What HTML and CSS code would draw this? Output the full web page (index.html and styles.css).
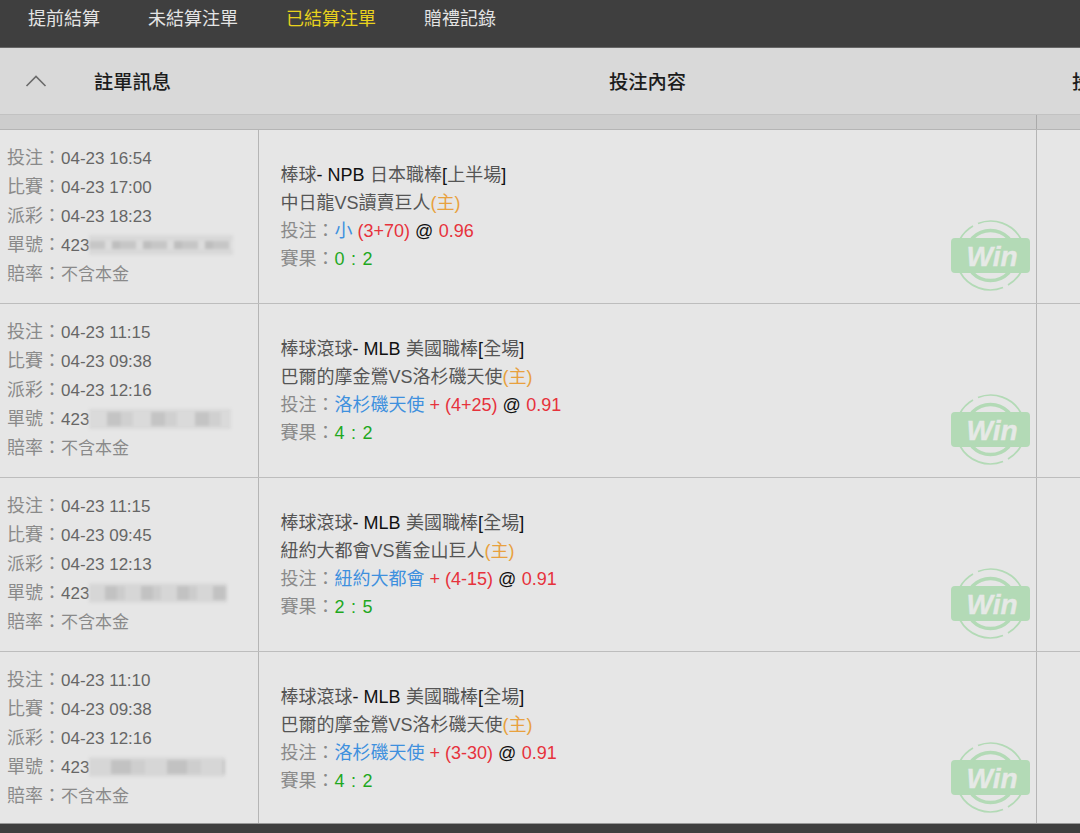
FILE: index.html
```html
<!DOCTYPE html>
<html lang="zh-Hant">
<head>
<meta charset="utf-8">
<title>已結算注單</title>
<link rel="stylesheet" href="styles.css">
</head>
<body>
<svg class="defs" width="0" height="0" aria-hidden="true">
  <symbol id="win" viewBox="0 0 80 72">
    <g fill="none" stroke="#b3dab6">
      <path d="M8.5 20A34.5 34.5 0 0 1 22 6" stroke-width="1.7"/>
      <path d="M27 3.5A34.5 34.5 0 0 1 70 19" stroke-width="1.7"/>
      <path d="M70.5 51A34.5 34.5 0 0 1 57 65" stroke-width="1.7"/>
      <path d="M52 67.5A34.5 34.5 0 0 1 9 52" stroke-width="1.7"/>
      <circle cx="39.5" cy="35.5" r="25" stroke-width="3.4"/>
    </g>
    <rect x="0" y="18" width="79" height="35" rx="4" fill="#b3dab6"/>
  </symbol>
</svg>
<nav class="nav">
  <a class="nav-item">提前結算</a>
  <a class="nav-item">未結算注單</a>
  <a class="nav-item active">已結算注單</a>
  <a class="nav-item">贈禮記錄</a>
</nav>
<header class="head">
  <div class="head-info">
    <svg class="chevron" width="22" height="12" viewBox="0 0 22 12"><path d="M1.5 11L11 1.5 20.5 11" fill="none" stroke="#6b6b6b" stroke-width="1.6"/></svg>
    <span>註單訊息</span>
  </div>
  <div class="head-content">投注內容</div>
  <div class="head-extra"><span>投注金額</span></div>
</header>
<div class="strip"><div></div><div class="strip-last"></div></div>
<main>
  <section class="row">
    <div class="info">
      <div><span class="label">投注：</span>04-23 16:54</div>
      <div><span class="label">比賽：</span>04-23 17:00</div>
      <div><span class="label">派彩：</span>04-23 18:23</div>
      <div><span class="label">單號：</span>423<span class="mosaic m1"></span></div>
      <div><span class="label">賠率：</span><span class="odds">不含本金</span></div>
    </div>
    <div class="bet">
      <div>棒球<b>- NPB </b>日本職棒<b>[</b>上半場<b>]</b></div>
      <div>中日龍VS讀賣巨人<span class="orange">(主)</span></div>
      <div><span class="muted">投注：</span><span class="blue">小</span> <span class="red">(3+70)</span> <b>@</b> <span class="red">0.96</span></div>
      <div><span class="muted">賽果：</span><span class="green">0 : 2</span></div>
      <svg class="stamp" viewBox="0 0 80 72"><use href="#win"/><text x="41" y="46" text-anchor="middle" class="win-text">Win</text></svg>
    </div>
    <div class="extra"></div>
  </section>
  <section class="row">
    <div class="info">
      <div><span class="label">投注：</span>04-23 11:15</div>
      <div><span class="label">比賽：</span>04-23 09:38</div>
      <div><span class="label">派彩：</span>04-23 12:16</div>
      <div><span class="label">單號：</span>423<span class="mosaic m2"></span></div>
      <div><span class="label">賠率：</span><span class="odds">不含本金</span></div>
    </div>
    <div class="bet">
      <div>棒球滾球<b>- MLB </b>美國職棒<b>[</b>全場<b>]</b></div>
      <div>巴爾的摩金鶯VS洛杉磯天使<span class="orange">(主)</span></div>
      <div><span class="muted">投注：</span><span class="blue">洛杉磯天使</span> <span class="red">+ (4+25)</span> <b>@</b> <span class="red">0.91</span></div>
      <div><span class="muted">賽果：</span><span class="green">4 : 2</span></div>
      <svg class="stamp" viewBox="0 0 80 72"><use href="#win"/><text x="41" y="46" text-anchor="middle" class="win-text">Win</text></svg>
    </div>
    <div class="extra"></div>
  </section>
  <section class="row">
    <div class="info">
      <div><span class="label">投注：</span>04-23 11:15</div>
      <div><span class="label">比賽：</span>04-23 09:45</div>
      <div><span class="label">派彩：</span>04-23 12:13</div>
      <div><span class="label">單號：</span>423<span class="mosaic m3"></span></div>
      <div><span class="label">賠率：</span><span class="odds">不含本金</span></div>
    </div>
    <div class="bet">
      <div>棒球滾球<b>- MLB </b>美國職棒<b>[</b>全場<b>]</b></div>
      <div>紐約大都會VS舊金山巨人<span class="orange">(主)</span></div>
      <div><span class="muted">投注：</span><span class="blue">紐約大都會</span> <span class="red">+ (4-15)</span> <b>@</b> <span class="red">0.91</span></div>
      <div><span class="muted">賽果：</span><span class="green">2 : 5</span></div>
      <svg class="stamp" viewBox="0 0 80 72"><use href="#win"/><text x="41" y="46" text-anchor="middle" class="win-text">Win</text></svg>
    </div>
    <div class="extra"></div>
  </section>
  <section class="row last">
    <div class="info">
      <div><span class="label">投注：</span>04-23 11:10</div>
      <div><span class="label">比賽：</span>04-23 09:38</div>
      <div><span class="label">派彩：</span>04-23 12:16</div>
      <div><span class="label">單號：</span>423<span class="mosaic m4"></span></div>
      <div><span class="label">賠率：</span><span class="odds">不含本金</span></div>
    </div>
    <div class="bet">
      <div>棒球滾球<b>- MLB </b>美國職棒<b>[</b>全場<b>]</b></div>
      <div>巴爾的摩金鶯VS洛杉磯天使<span class="orange">(主)</span></div>
      <div><span class="muted">投注：</span><span class="blue">洛杉磯天使</span> <span class="red">+ (3-30)</span> <b>@</b> <span class="red">0.91</span></div>
      <div><span class="muted">賽果：</span><span class="green">4 : 2</span></div>
      <svg class="stamp" viewBox="0 0 80 72"><use href="#win"/><text x="41" y="46" text-anchor="middle" class="win-text">Win</text></svg>
    </div>
    <div class="extra"></div>
  </section>
</main>
<div class="foot"></div>
</body>
</html>
```
FILE: styles.css
```css
* { box-sizing: border-box; }
html, body { margin: 0; height: 833px; overflow: hidden; }
body {
  width: 1080px;
  background: #e6e6e6;
  font-family: "Liberation Sans", "Noto Sans CJK TC", sans-serif;
  font-size: 17px;
  color: #444;
}
.defs { position: absolute; }
.nav {
  height: 48px;
  background: #3f3f3f;
  border-bottom: 1px solid #666;
  display: flex;
  gap: 48px;
  padding: 6px 0 0 28px;
  font-size: 18px;
  line-height: 27px;
  color: #e4e4e4;
}
.nav-item.active { color: #e8d21d; }
.head {
  height: 66px;
  background: #d9d9d9;
  display: grid;
  grid-template-columns: 259px 777px 44px;
  align-items: center;
  font-size: 19.3px;
  font-weight: 500;
  color: #1c1c1c;
  overflow: hidden;
}
.head-info { display: flex; align-items: center; padding-left: 25px; gap: 47px; }
.head-content { text-align: center; }
.head-extra { padding-left: 36px; white-space: nowrap; overflow: hidden; }
.strip {
  height: 16px;
  background: #cdcdcd;
  border-top: 1px solid #c2c2c2;
  border-bottom: 1px solid #b5b5b5;
  display: grid;
  grid-template-columns: 1036px 44px;
}
.strip-last { border-left: 1px solid #aaa; }
.row {
  height: 174px;
  display: grid;
  grid-template-columns: 259px 777px 44px;
  border-bottom: 1px solid #bdbdbd;
}
.row.last { height: 172px; border-bottom-color: #999; }
.info, .bet { display: flex; flex-direction: column; }
.info {
  padding: 14px 0 0 7px;
  line-height: 29px;
  color: #666;
  border-right: 1px solid #b5b5b5;
  white-space: nowrap;
}
.label { display: inline-block; width: 54px; font-size: 18px; color: #8a8a8a; }
.odds { color: #8a8a8a; }
.bet {
  position: relative;
  padding: 31px 0 0 21.5px;
  line-height: 28px;
  font-size: 18px;
  color: #555;
  white-space: nowrap;
}
.bet b { font-weight: normal; color: #111; padding-right: .4px; }
.extra { border-left: 1px solid #b5b5b5; }
.muted { color: #8a8a8a; }
.blue { color: #3e90de; }
.red { color: #e6323c; }
.orange { color: #e8a13e; }
.green { color: #1fa81f; word-spacing: 1.5px; }
.stamp { position: absolute; right: 5px; top: 90px; width: 80px; height: 72px; }
.win-text {
  font-family: "Liberation Sans", sans-serif;
  font-size: 28px;
  font-weight: bold;
  font-style: italic;
  fill: #e6e9e6;
  stroke: #e6e9e6;
  stroke-width: .4px;
}
.chevron { display: block; }
.mosaic {
  display: inline-block;
  height: 20px;
  vertical-align: middle;
  filter: blur(1.5px);
  background-color: #d9d9d9;
}
.m1 {
  width: 144px;
  margin-top: -3px;
  background-image:
    repeating-linear-gradient(90deg, #c6c6c6 0 16px, #dcdcdc 16px 23px, #bebebe 23px 31px);
  background-size: 100% 8px;
  background-position: 0 6px;
  background-repeat: no-repeat;
}
.m2 {
  width: 142px;
  margin-top: -3px;
  background-image:
    repeating-linear-gradient(90deg, #dadada 0 18px, #c4c4c4 18px 32px, #d0d0d0 32px 44px);
  background-size: 100% 14px;
  background-position: 0 3px;
  background-repeat: no-repeat;
}
.m3 {
  width: 138px;
  margin-top: -3px;
  background-image:
    repeating-linear-gradient(90deg, #d6d6d6 0 16px, #c2c2c2 16px 28px, #cccccc 28px 36px);
  background-size: 100% 14px;
  background-position: 0 3px;
  background-repeat: no-repeat;
}
.m4 {
  width: 136px;
  margin-top: -3px;
  background-image:
    repeating-linear-gradient(90deg, #d6d6d6 0 22px, #c2c2c2 22px 42px, #cecece 42px 56px);
  background-size: 100% 14px;
  background-position: 0 3px;
  background-repeat: no-repeat;
}
.foot { height: 9px; background: #3f3f3f; }
```
